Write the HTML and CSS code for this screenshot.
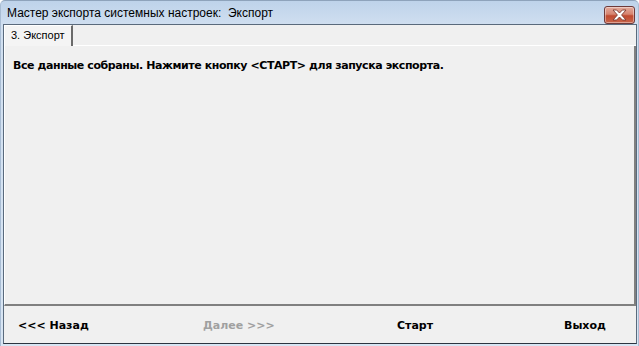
FILE: index.html
```html
<!DOCTYPE html>
<html lang="ru">
<head>
<meta charset="utf-8">
<title>Мастер экспорта системных настроек</title>
<link rel="stylesheet" href="styles.css">
</head>
<body>
<div class="window">
  <div class="titlebar">
    <span class="title">Мастер экспорта системных настроек:&nbsp; Экспорт</span>
    <button class="close" aria-label="Закрыть">
      <svg width="17" height="12" viewBox="0 0 17 12">
        <path d="M2 1 H5.6 L8.5 4 L11.4 1 H15 L10.6 6 L15 11 H11.4 L8.5 8 L5.6 11 H2 L6.4 6 Z" fill="#ffffff" stroke="#7a3a30" stroke-width="0.9" stroke-linejoin="round"/>
      </svg>
    </button>
  </div>
  <div class="client">
    <div class="tabs">
      <div class="tab">3. Экспорт</div>
      <div class="tab-rest"></div>
    </div>
    <div class="page">
      <p class="message">Все данные собраны. Нажмите кнопку &lt;СТАРТ&gt; для запуска экспорта.</p>
    </div>
    <div class="buttons">
      <span class="btn">&lt;&lt;&lt; Назад</span>
      <span class="btn disabled">Далее &gt;&gt;&gt;</span>
      <span class="btn">Старт</span>
      <span class="btn">Выход</span>
    </div>
  </div>
</div>
</body>
</html>
```
FILE: styles.css
```css
html, body {
  margin: 0;
  padding: 0;
  background: #ffffff;
}
.window {
  box-sizing: border-box;
  width: 639px;
  height: 346px;
  display: flex;
  flex-direction: column;
  background: linear-gradient(to bottom, #bed3ea 0px, #d0dff0 24px, #d8e5f3 100%);
  border-left: 1px solid #a9bdd4;
  border-right: 1px solid #a9bdd4;
  border-top: 1px solid #8ea3bb;
  padding: 0 1px 0 2px;
  border-radius: 5px 5px 0 0;
}
.titlebar {
  height: 23px;
  display: flex;
  align-items: center;
  justify-content: space-between;
  padding: 0 2px 0 4px;
}
.title {
  font-family: "Liberation Sans", Arial, sans-serif;
  font-size: 12px;
  color: #000000;
  margin-top: 1px;
}
.close {
  box-sizing: border-box;
  width: 31px;
  height: 18px;
  margin-top: 4px;
  padding: 0;
  border: 1px solid #6e3a3a;
  border-radius: 3px;
  background: linear-gradient(to bottom, #e3aa9c 0%, #d68470 45%, #c04a30 55%, #c9654a 100%);
  box-shadow: inset 0 0 0 1px rgba(255,255,255,0.4);
  display: flex;
  align-items: center;
  justify-content: center;
}
.client {
  flex: 1;
  display: flex;
  flex-direction: column;
  background: #f0f0f0;
  border: 1px solid #5a6a7c;
  border-bottom: 1px solid #2b3440;
  margin-bottom: 2px;
}
.tabs {
  height: 21px;
  display: flex;
}
.tab {
  box-sizing: border-box;
  width: 69px;
  height: 21px;
  padding: 3px 0 0 6px;
  background: #f4f4f4;
  border-top: 1px solid #ffffff;
  border-left: 1px solid #ffffff;
  border-right: 2px solid #6a6a6a;
  font-family: "Liberation Sans", Arial, sans-serif;
  font-size: 11px;
  color: #000000;
}
.tab-rest {
  flex: 1;
  border-bottom: 1px solid #ffffff;
}
.page {
  height: 260px;
  box-sizing: border-box;
  border-right: 2px solid #808080;
  border-bottom: 2px solid #808080;
  border-left: 1px solid #ffffff;
  padding: 13px 0 0 8px;
}
.message {
  margin: 0;
  font-family: "DejaVu Sans", Verdana, sans-serif;
  font-weight: bold;
  font-size: 11px;
  letter-spacing: -0.42px;
  color: #000000;
}
.buttons {
  flex: 1;
  display: grid;
  grid-template-columns: 185px 194px 167px auto;
  align-items: center;
  padding: 1px 0 0 14px;
}
.btn {
  font-family: "DejaVu Sans", Verdana, sans-serif;
  font-weight: bold;
  font-size: 11px;
  color: #000000;
}
.btn.disabled {
  color: #a0a0a0;
}
```
